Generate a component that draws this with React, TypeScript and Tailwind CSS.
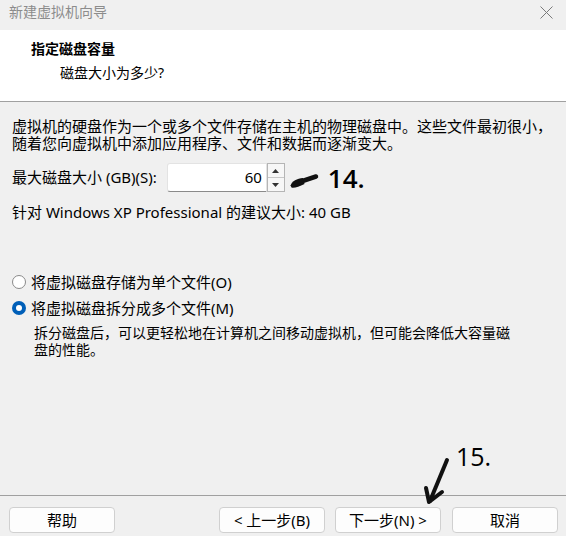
import React from "react";

const FONT = { fontFamily: '"Noto Sans", "Noto Sans CJK SC", sans-serif' };

function Btn({ children }: { children: React.ReactNode }) {
  return (
    <button className="w-[106px] h-[26px] rounded-[4px] border border-[#d0d0d0] bg-[#fdfdfd] text-[15px] leading-none text-black flex items-center justify-center">
      {children}
    </button>
  );
}

export default function App() {
  return (
    <div className="relative w-[566px] h-[536px] bg-[#f0f0f0] flex flex-col text-black overflow-hidden" style={FONT}>
      {/* title bar */}
      <div className="h-[30px] flex justify-between pl-[9px] pr-[13px] pt-[2px]">
        <div className="text-[14px] leading-[20px] text-[#8c8c8c]">新建虚拟机向导</div>
        <svg width="13" height="13" viewBox="0 0 13 13" className="mt-[4px]">
          <path d="M0.5 0.5 L12.5 12.5 M12.5 0.5 L0.5 12.5" stroke="#7a7a7a" strokeWidth="1" />
        </svg>
      </div>
      {/* header */}
      <div className="h-[72px] bg-white border-b border-[#a0a0a0] pt-[9px]">
        <div className="pl-[31px] text-[14px] leading-[20px] font-bold">指定磁盘容量</div>
        <div className="pl-[60px] mt-[4px] text-[14px] leading-[20px]">磁盘大小为多少?</div>
      </div>
      {/* content */}
      <div className="flex-1 pl-[12px] pt-[16px] text-[15px]">
        <div className="leading-[17px] whitespace-nowrap">
          虚拟机的硬盘作为一个或多个文件存储在主机的物理磁盘中。这些文件最初很小，
          <br />
          随着您向虚拟机中添加应用程序、文件和数据而逐渐变大。
        </div>
        <div className="mt-[11px] flex items-center h-[29px]">
          <span className="leading-[17px]">最大磁盘大小 (GB)(S):</span>
          <div className="ml-[10px] flex h-[29px]">
            <div className="w-[100px] h-full bg-white border border-[#e3e3e3] border-b-[#8a8a8a] rounded-l-[3px] flex items-center justify-end pr-[4px] leading-none">
              60
            </div>
            <div className="w-[18px] h-full flex flex-col border border-[#b5b5b5] bg-[#f7f7f7]">
              <div className="flex-1 flex items-center justify-center border-b border-[#c8c8c8]">
                <svg width="7" height="4" viewBox="0 0 7 4"><path d="M0 4 L3.5 0 L7 4 Z" fill="#333" /></svg>
              </div>
              <div className="flex-1 flex items-center justify-center">
                <svg width="7" height="4" viewBox="0 0 7 4"><path d="M0 0 L3.5 4 L7 0 Z" fill="#333" /></svg>
              </div>
            </div>
          </div>
          {/* annotation arrow 14 */}
          <svg width="30" height="16" viewBox="0 0 30 16" className="ml-[4px] mt-[6px]">
            <path d="M27 3.5 L12 8.5" stroke="#111" strokeWidth="4.5" strokeLinecap="round" />
            <path d="M1.5 12.5 C3 8 8 5.5 14 5 L15.5 11 C10 13.5 5 15.5 2.5 14.5 Z" fill="#111" />
          </svg>
          <span className="ml-[9px] text-[26px] leading-none font-semibold" style={{ fontFamily: '"Open Sans", sans-serif' }}>14.</span>
        </div>
        <div className="mt-[12px] leading-[17px] whitespace-nowrap">针对 Windows XP Professional 的建议大小: 40 GB</div>

        <div className="mt-[51px] flex items-center h-[20px]">
          <span className="w-[14px] h-[14px] rounded-full border border-[#8a8a8a] bg-white" />
          <span className="ml-[5px] leading-[20px]">将虚拟磁盘存储为单个文件(O)</span>
        </div>
        <div className="mt-[6px] flex items-center h-[20px]">
          <span className="w-[14px] h-[14px] rounded-full bg-[#005fb8] flex items-center justify-center">
            <span className="w-[6px] h-[6px] rounded-full bg-white" />
          </span>
          <span className="ml-[5px] leading-[20px]">将虚拟磁盘拆分成多个文件(M)</span>
        </div>
        <div className="mt-[6px] pl-[22px] text-[14px] leading-[17px] whitespace-nowrap">
          拆分磁盘后，可以更轻松地在计算机之间移动虚拟机，但可能会降低大容量磁
          <br />
          盘的性能。
        </div>
      </div>
      {/* footer */}
      <div className="h-[41px] border-t border-[#a0a0a0] flex items-start pt-[11px] pl-[9px]">
        <Btn>帮助</Btn>
        <div className="ml-[104px]"><Btn>&lt; 上一步(B)</Btn></div>
        <div className="ml-[10px]"><Btn>下一步(N) &gt;</Btn></div>
        <div className="ml-[11px]"><Btn>取消</Btn></div>
      </div>

      {/* annotation 15 */}
      <div className="absolute left-[456px] top-[444px] text-[25px] leading-none" style={{ fontFamily: '"Open Sans", sans-serif' }}>15.</div>
      <svg className="absolute left-[418px] top-[455px]" width="34" height="52" viewBox="0 0 34 52">
        <path d="M29 5 L12 46" stroke="#111" strokeWidth="4" strokeLinecap="round" />
        <path d="M8 33 L11 47 L24 37" stroke="#111" strokeWidth="4" strokeLinecap="round" strokeLinejoin="round" fill="none" />
      </svg>
    </div>
  );
}
